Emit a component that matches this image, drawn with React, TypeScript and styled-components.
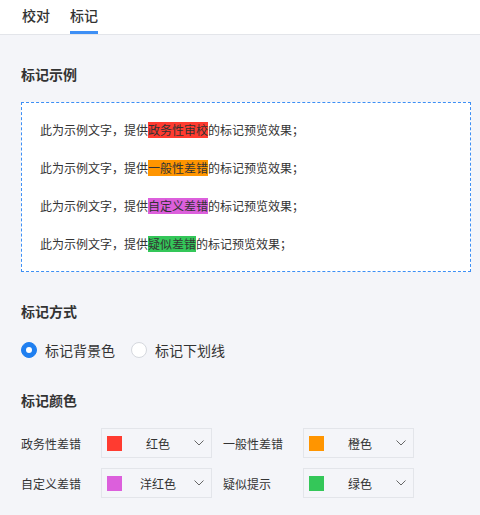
import React, { useState } from "react";
import styled, { createGlobalStyle } from "styled-components";

const Global = createGlobalStyle`
  html, body { margin: 0; padding: 0; background: #f4f5f9; }
  body { font-family: "Noto Sans CJK SC", "Noto Sans", sans-serif; color: #333; }
  * { box-sizing: border-box; }
`;

const Page = styled.div`
  width: 480px;
  min-height: 515px;
  background: #f4f5f9;
`;

const Header = styled.div`
  height: 35px;
  background: #fff;
  border-bottom: 1px solid #e3e5ea;
  display: flex;
  gap: 20px;
  padding-left: 22px;
`;

const Tab = styled.div<{ $active?: boolean }>`
  position: relative;
  height: 34px;
  line-height: 30px;
  font-size: 14px;
  font-weight: 500;
  color: #333;
  padding: 0;
  &::after {
    content: "";
    display: ${(p) => (p.$active ? "block" : "none")};
    position: absolute;
    left: 0;
    right: 0;
    bottom: 0;
    height: 3px;
    background: #3d8ff5;
  }
`;

const Content = styled.div`
  padding: 0 9px 0 21px;
  display: flex;
  flex-direction: column;
`;

const SectionTitle = styled.div<{ $mt: number; $mb: number }>`
  font-size: 14px;
  line-height: 20px;
  font-weight: 600;
  color: #333;
  margin-top: ${(p) => p.$mt}px;
  margin-bottom: ${(p) => p.$mb}px;
`;

const Preview = styled.div`
  background: #fff;
  border: 1px dashed #3d8ff5;
  padding: 19px 18px;
  display: flex;
  flex-direction: column;
  gap: 22px;
`;

const PreviewLine = styled.div`
  font-size: 12px;
  line-height: 16px;
  height: 16px;
  color: #333;
  white-space: nowrap;
`;

const Mark = styled.span<{ $color: string }>`
  background: ${(p) => p.$color};
  display: inline-block;
  height: 16px;
  line-height: 16px;
`;

const RadioRow = styled.div`
  display: flex;
  align-items: center;
  height: 20px;
  gap: 16px;
`;

const RadioItem = styled.label`
  display: flex;
  align-items: center;
  gap: 8px;
  font-size: 14px;
  line-height: 20px;
  color: #333;
  cursor: pointer;
`;

const RadioCircle = styled.span<{ $checked: boolean }>`
  width: 16px;
  height: 16px;
  border-radius: 50%;
  display: flex;
  align-items: center;
  justify-content: center;
  background: ${(p) => (p.$checked ? "#1f7ff0" : "#fff")};
  border: 1px solid ${(p) => (p.$checked ? "#1f7ff0" : "#d5d8de")};
  &::after {
    content: "";
    width: 6px;
    height: 6px;
    border-radius: 50%;
    background: #fff;
    display: ${(p) => (p.$checked ? "block" : "none")};
  }
`;

const ColorGrid = styled.div`
  display: grid;
  grid-template-columns: 191px 191px;
  column-gap: 11px;
  row-gap: 10px;
`;

const ColorCell = styled.div`
  display: flex;
  align-items: center;
`;

const ColorLabel = styled.div`
  width: 80px;
  font-size: 12px;
  color: #333;
`;

const Select = styled.div`
  width: 111px;
  height: 30px;
  border: 1px solid #e3e5ea;
  display: flex;
  align-items: center;
  padding: 0 7px 0 5px;
`;

const Swatch = styled.span<{ $color: string }>`
  width: 15px;
  height: 15px;
  background: ${(p) => p.$color};
  flex: none;
`;

const SelectText = styled.span`
  flex: 1;
  text-align: center;
  font-size: 12px;
  color: #333;
`;

const Chevron = () => (
  <svg width="10" height="6" viewBox="0 0 10 6" fill="none">
    <path d="M0.5 0.5 L5 5 L9.5 0.5" stroke="#666" strokeWidth="1" />
  </svg>
);

const RED = "#ff3b30";
const ORANGE = "#ff9500";
const MAGENTA = "#dc5fdc";
const GREEN = "#34c759";

const lines = [
  { text: "政务性审校", color: RED },
  { text: "一般性差错", color: ORANGE },
  { text: "自定义差错", color: MAGENTA },
  { text: "疑似差错", color: GREEN },
];

const colorRows = [
  { label: "政务性差错", color: RED, name: "红色" },
  { label: "一般性差错", color: ORANGE, name: "橙色" },
  { label: "自定义差错", color: MAGENTA, name: "洋红色" },
  { label: "疑似提示", color: GREEN, name: "绿色" },
];

export default function App() {
  const [mode, setMode] = useState(0);
  return (
    <Page>
      <Global />
      <Header>
        <Tab>校对</Tab>
        <Tab $active>标记</Tab>
      </Header>
      <Content>
        <SectionTitle $mt={29} $mb={18}>标记示例</SectionTitle>
        <Preview>
          {lines.map((l) => (
            <PreviewLine key={l.text}>
              此为示例文字，提供<Mark $color={l.color}>{l.text}</Mark>的标记预览效果；
            </PreviewLine>
          ))}
        </Preview>
        <SectionTitle $mt={29} $mb={19}>标记方式</SectionTitle>
        <RadioRow>
          {["标记背景色", "标记下划线"].map((t, i) => (
            <RadioItem key={t} onClick={() => setMode(i)}>
              <RadioCircle $checked={mode === i} />
              {t}
            </RadioItem>
          ))}
        </RadioRow>
        <SectionTitle $mt={30} $mb={18}>标记颜色</SectionTitle>
        <ColorGrid>
          {colorRows.map((r) => (
            <ColorCell key={r.label}>
              <ColorLabel>{r.label}</ColorLabel>
              <Select>
                <Swatch $color={r.color} />
                <SelectText>{r.name}</SelectText>
                <Chevron />
              </Select>
            </ColorCell>
          ))}
        </ColorGrid>
      </Content>
    </Page>
  );
}
